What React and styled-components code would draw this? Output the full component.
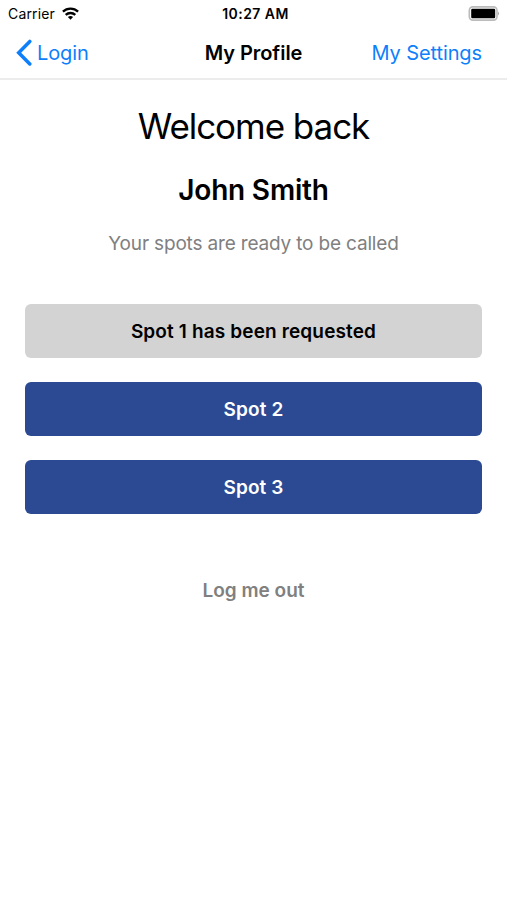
import React from "react";
import styled, { createGlobalStyle } from "styled-components";

const GlobalStyle = createGlobalStyle`
  * {
    box-sizing: border-box;
  }

  body {
    margin: 0;
    background-color: #fff;
    font-family: Inter, "Liberation Sans", sans-serif;
    color: #000;
  }
`;

const Screen = styled.div`
  width: 100%;
  max-width: 507px;
  height: 900px;
  display: flex;
  flex-direction: column;
  overflow: hidden;
`;

const StatusBar = styled.div`
  height: 27px;
  padding: 0 7px 0 8px;
  display: grid;
  grid-template-columns: 1fr auto 1fr;
  align-items: center;
  font-size: 14px;
`;

const Carrier = styled.div`
  display: flex;
  align-items: center;
  gap: 7px;
  letter-spacing: 0.15px;
`;

const WifiIcon = styled.svg`
  margin-bottom: 1px;
`;

const Clock = styled.div`
  padding-left: 3px;
  font-weight: 600;
  font-size: 14px;
  letter-spacing: 0.45px;
`;

const Battery = styled.svg`
  justify-self: end;
`;

const Header = styled.div`
  height: 53px;
  padding: 0 16px;
  display: grid;
  grid-template-columns: 1fr auto 1fr;
  align-items: center;
  border-bottom: 2px solid #ececec;
  font-size: 20px;
`;

const HeaderLink = styled.button`
  justify-self: ${(props) => props.$side};
  display: flex;
  align-items: center;
  gap: 5px;
  padding: 0 ${(props) => (props.$side === "end" ? "9px" : "0")} 0 0;
  border: 0;
  background: none;
  font: inherit;
  white-space: nowrap;
  letter-spacing: -0.1px;
  color: #0e7ffb;
`;

const Title = styled.div`
  font-weight: 600;
  letter-spacing: -0.05px;
`;

const Content = styled.div`
  padding: 24px 25px 0;
  display: flex;
  flex-direction: column;
  align-items: center;
`;

const Welcome = styled.h1`
  margin: 0;
  line-height: 44px;
  font-size: 35px;
  font-weight: 400;
  letter-spacing: -1.05px;
`;

const UserName = styled.h2`
  margin: 24px 0 0;
  line-height: 36px;
  font-size: 28px;
  font-weight: 600;
  letter-spacing: -0.2px;
`;

const Message = styled.p`
  margin: 23px 0 0;
  line-height: 26px;
  font-size: 19px;
  letter-spacing: -0.17px;
  color: #808080;
`;

const SpotList = styled.div`
  width: 100%;
  margin-top: 47px;
  display: flex;
  flex-direction: column;
  gap: 24.6px;
`;

const SpotButton = styled.button`
  height: 53.6px;
  padding: 1px 0 0;
  border: 0;
  border-radius: 6px;
  background-color: ${(props) => (props.$requested ? "#d3d3d3" : "#2c4a93")};
  color: ${(props) => (props.$requested ? "#000" : "#fff")};
  font: inherit;
  font-size: 19px;
  font-weight: 600;
  letter-spacing: 0.14px;
`;

const LogoutButton = styled.button`
  margin-top: 64px;
  padding: 0;
  border: 0;
  background: none;
  font: inherit;
  line-height: 26px;
  font-size: 19px;
  font-weight: 600;
  color: #808080;
`;

const spots = [
  { label: "Spot 1 has been requested", requested: true },
  { label: "Spot 2", requested: false },
  { label: "Spot 3", requested: false },
];

export default function App() {
  return (
    <Screen>
      <GlobalStyle />
      <StatusBar>
        <Carrier>
          Carrier
          <WifiIcon width="17" height="13" viewBox="0 0 17 13" fill="none" stroke="#000" strokeWidth="2.3">
            <path d="M0.9 4.6A11 11 0 0 1 16.1 4.6" />
            <path d="M3.7 7.9A7 7 0 0 1 13.3 7.9" />
            <path d="M8.5 12.8L5.9 10.1A3.8 3.8 0 0 1 11.1 10.1Z" fill="#000" stroke="none" />
          </WifiIcon>
        </Carrier>
        <Clock>10:27 AM</Clock>
        <Battery width="32" height="15" viewBox="0 0 32 15">
          <rect x="1.3" y="0.9" width="27.7" height="13.2" rx="3.5" fill="none" stroke="#bbb" strokeWidth="1.6" />
          <rect x="3.2" y="2.7" width="24" height="9.6" rx="1.2" />
          <path d="M30 5.5Q32 7.5 30 9.5Z" fill="#aaa" />
        </Battery>
      </StatusBar>
      <Header>
        <HeaderLink $side="start">
          <svg width="16" height="28" viewBox="0 0 16 28" fill="none" stroke="#0e7ffb" strokeWidth="3.5" strokeLinecap="round">
            <path d="M13.8 2.4L2.7 13.7L13.8 25" />
          </svg>
          Login
        </HeaderLink>
        <Title>My Profile</Title>
        <HeaderLink $side="end">My Settings</HeaderLink>
      </Header>
      <Content>
        <Welcome>Welcome back</Welcome>
        <UserName>John Smith</UserName>
        <Message>Your spots are ready to be called</Message>
        <SpotList>
          {spots.map((spot) => (
            <SpotButton key={spot.label} $requested={spot.requested}>
              {spot.label}
            </SpotButton>
          ))}
        </SpotList>
        <LogoutButton>Log me out</LogoutButton>
      </Content>
    </Screen>
  );
}
